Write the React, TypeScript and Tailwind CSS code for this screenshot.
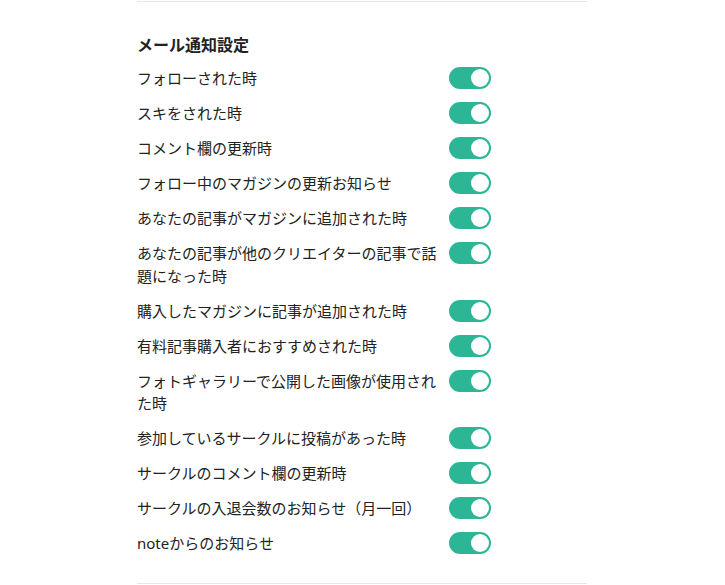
const items = [
  "フォローされた時",
  "スキをされた時",
  "コメント欄の更新時",
  "フォロー中のマガジンの更新お知らせ",
  "あなたの記事がマガジンに追加された時",
  "あなたの記事が他のクリエイターの記事で話題になった時",
  "購入したマガジンに記事が追加された時",
  "有料記事購入者におすすめされた時",
  "フォトギャラリーで公開した画像が使用された時",
  "参加しているサークルに投稿があった時",
  "サークルのコメント欄の更新時",
  "サークルの入退会数のお知らせ（月一回）",
  "noteからのお知らせ",
];

function Toggle() {
  return (
    <button
      type="button"
      className="shrink-0 w-[42px] h-[22px] rounded-full bg-[#2cb696] flex items-center justify-end px-[2px]"
    >
      <span className="block w-[18px] h-[18px] rounded-full bg-white" />
    </button>
  );
}

export default function App() {
  return (
    <div
      className="w-full h-[585px] bg-white text-[#222222] overflow-hidden"
      style={{ fontFamily: '"Noto Sans", "Noto Sans CJK JP", sans-serif' }}
    >
      <div className="ml-[137px] mt-px w-[450px] h-[583px] border-t border-b border-[#e6e6e6]">
        <h2 className="pt-[31px] text-[16px] font-bold leading-6">メール通知設定</h2>
        <ul className="mt-[10px] flex flex-col gap-[12.5px]">
          {items.map((label) => (
            <li key={label} className="flex items-start gap-3">
              <span className="w-[300px] text-[15px] leading-[22.5px]">{label}</span>
              <Toggle />
            </li>
          ))}
        </ul>
      </div>
    </div>
  );
}
